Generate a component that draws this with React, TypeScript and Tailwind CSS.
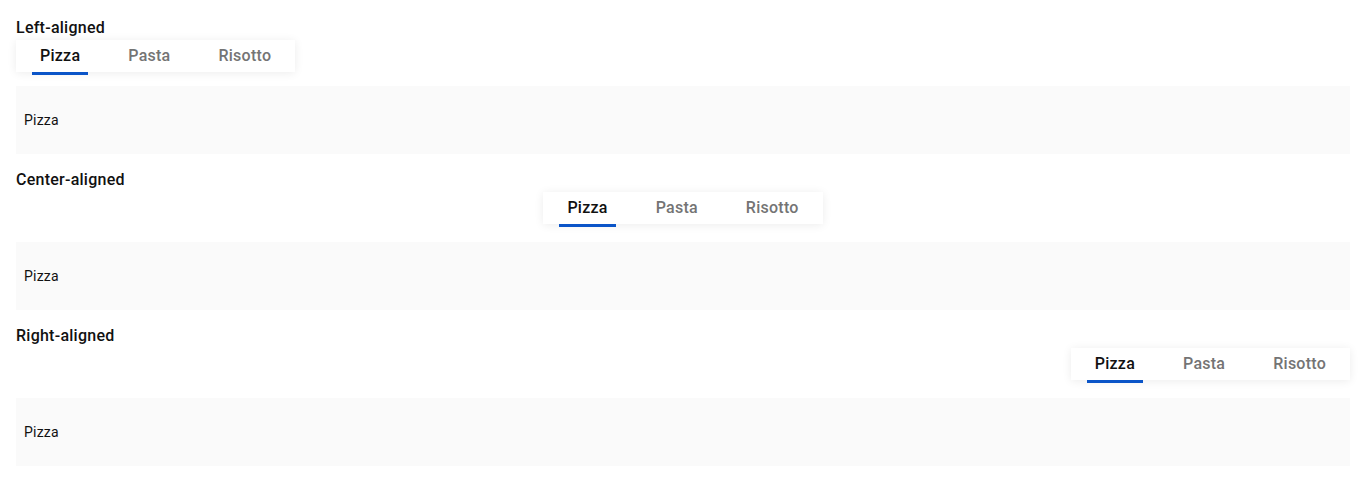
import React, { useState } from 'react';

type Align = 'left' | 'center' | 'right';

const tabs = ['Pizza', 'Pasta', 'Risotto'];

const sections: { title: string; align: Align }[] = [
  { title: 'Left-aligned', align: 'left' },
  { title: 'Center-aligned', align: 'center' },
  { title: 'Right-aligned', align: 'right' },
];

const TabBar: React.FC<{ active: number; onChange: (i: number) => void }> = ({ active, onChange }) => (
  <div className="flex h-8 items-stretch gap-8 bg-white px-4 shadow-[0_1px_10px_rgba(0,0,0,0.08)]">
    {tabs.map((t, i) => (
      <button
        key={t}
        onClick={() => onChange(i)}
        className={`relative px-2 text-base font-medium leading-6 tracking-[0.25px] ${
          i === active ? 'text-[#111111]' : 'text-[#747474]'
        }`}
      >
        {t}
        {i === active && <span className="absolute -bottom-[3px] left-0 right-0 h-[3px] bg-[#0b55c8]" />}
      </button>
    ))}
  </div>
);

const Section: React.FC<{ title: string; align: Align; first: boolean }> = ({ title, align, first }) => {
  const [active, setActive] = useState(0);
  const justify = align === 'left' ? 'justify-start' : align === 'center' ? 'justify-center' : 'justify-end';
  return (
    <section className={first ? '' : 'mt-[14px]'}>
      <h3 className="text-base font-medium leading-6 tracking-[0.25px] text-[#111111]">{title}</h3>
      <div className={`flex ${justify}`}>
        <TabBar active={active} onChange={setActive} />
      </div>
      <div className={`${first ? 'mt-[14px]' : 'mt-[18px]'} bg-[#fafafa] px-2 py-6 text-sm leading-5 tracking-[0.2px] text-[#111111]`}>
        {tabs[active]}
      </div>
    </section>
  );
};

export default function App() {
  return (
    <div className="min-h-screen bg-white px-4 pt-4 font-['Roboto',_'Liberation_Sans',_sans-serif]">
      {sections.map((s, i) => (
        <Section key={s.title} title={s.title} align={s.align} first={i === 0} />
      ))}
    </div>
  );
}
